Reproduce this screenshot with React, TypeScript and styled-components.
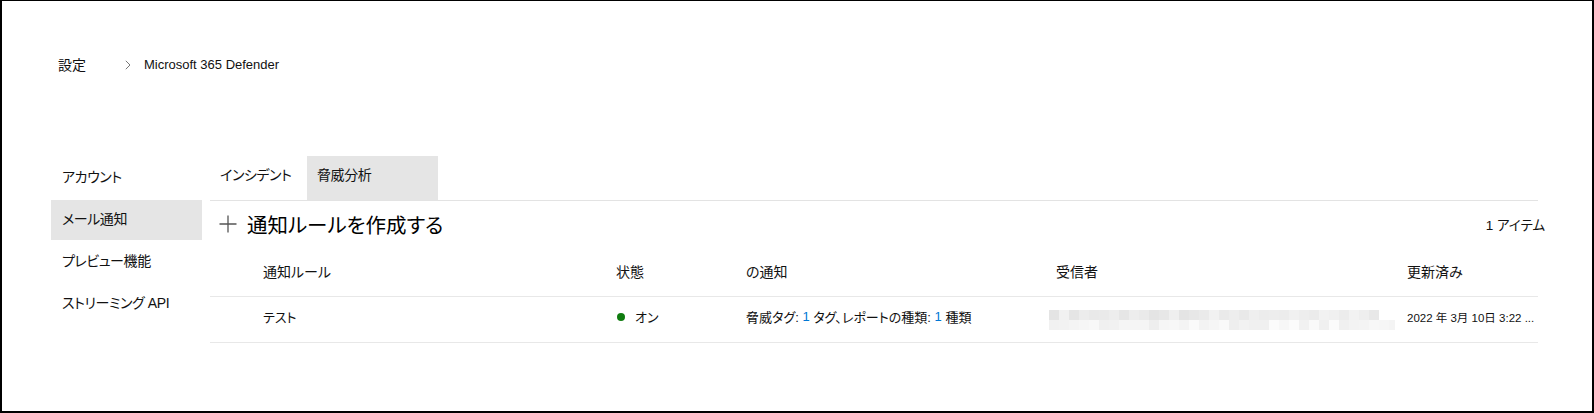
import React from "react";
import styled, { createGlobalStyle } from "styled-components";

const GlobalStyle = createGlobalStyle`
  html, body {
    margin: 0;
    padding: 0;
    background: #fff;
  }
  body {
    font-family: "Liberation Sans", "Noto Sans CJK JP", sans-serif;
    font-size: 14px;
    color: #111;
    font-feature-settings: "palt";
  }
`;

const Frame = styled.div`
  box-sizing: border-box;
  width: 1594px;
  height: 413px;
  border: 2px solid #000;
  border-top-width: 1px;
  padding-left: 49px;
  overflow: hidden;
`;

const Breadcrumb = styled.div`
  display: flex;
  align-items: center;
  height: 20px;
  margin-top: 54px;
  padding-left: 7px;
`;

const Crumb = styled.span`
  line-height: 20px;
`;

const CrumbLink = styled.span`
  font-size: 13px;
  line-height: 20px;
`;

const Chevron = styled.svg`
  margin: 0 13px 0 39px;
`;

const Body = styled.div`
  display: flex;
  align-items: flex-start;
  margin-top: 81px;
`;

const Nav = styled.nav`
  width: 151px;
  display: flex;
  flex-direction: column;
  gap: 2px;
  padding-top: 2px;
  letter-spacing: -0.03em;
`;

const NavItem = styled.div<{ $active?: boolean }>`
  box-sizing: border-box;
  height: 40px;
  display: flex;
  align-items: center;
  padding: 0 0 4px 11px;
  background: ${(p) => (p.$active ? "#e5e5e5" : "transparent")};
`;

const Content = styled.div`
  width: 1328px;
  margin-left: 8px;
`;

const TabBar = styled.div`
  display: flex;
  border-bottom: 1px solid #e3e3e3;
`;

const Tab = styled.div<{ $w: number; $active?: boolean }>`
  box-sizing: border-box;
  width: ${(p) => p.$w}px;
  height: 44px;
  display: flex;
  align-items: center;
  padding: 0 0 9px 10px;
  letter-spacing: -0.03em;
  background: ${(p) => (p.$active ? "#e5e5e5" : "transparent")};
`;

const HeaderRow = styled.div`
  box-sizing: border-box;
  height: 48px;
  display: flex;
  align-items: center;
  padding-bottom: 3px;
  margin-right: -7px;
`;

const PlusIcon = styled.svg`
  margin-left: 9px;
  margin-right: 10px;
`;

const Title = styled.h1`
  margin: 0;
  font-size: 20.5px;
  font-weight: 400;
  color: #000;
  flex: 1;
`;

const Count = styled.span`
  font-size: 13.5px;
`;

const Grid = styled.div`
  box-sizing: border-box;
  display: grid;
  grid-template-columns: 53px 353px 130px 310px 351px 131px;
  align-items: center;
`;

const HeadRow = styled(Grid)`
  height: 48px;
  padding-bottom: 3px;
  border-bottom: 1px solid #e8e8e8;
`;

const DataRow = styled(Grid)`
  height: 46px;
  padding-bottom: 6px;
  border-bottom: 1px solid #e8e8e8;
`;

const Cell = styled.div<{ $small?: boolean }>`
  font-size: ${(p) => (p.$small ? "11.5px" : "13px")};
  white-space: nowrap;
  display: flex;
  align-items: center;
`;

const HeadCell = styled.div`
  font-size: 14px;
  white-space: nowrap;
`;

const Dot = styled.span`
  width: 8px;
  height: 8px;
  border-radius: 50%;
  background: #107c10;
  margin: 0 10px 0 1px;
`;

const Num = styled.span`
  color: #0078d4;
`;

const Mosaic = styled.svg`
  margin-left: -7px;
  margin-top: 6px;
  display: block;
`;

const shade = (i: number, row: number) => {
  const v = Math.abs(Math.sin(i * 12.9898 + row * 78.233) * 43758.5453) % 1;
  const base = row === 0 ? 228 : 238;
  const g = Math.round(base + v * 14);
  return `rgb(${g},${g},${g})`;
};

const Redacted: React.FC = () => (
  <Mosaic width="346" height="20" viewBox="0 0 346 20">
    {Array.from({ length: 35 }).map((_, i) => (
      <rect key={`a${i}`} x={i * 10} y={0} width={10} height={10} fill={i >= 33 ? "#fff" : shade(i, 0)} />
    ))}
    {Array.from({ length: 35 }).map((_, i) => (
      <rect key={`b${i}`} x={i * 10} y={10} width={10} height={10} fill={shade(i, 1)} />
    ))}
  </Mosaic>
);

const App: React.FC = () => {
  return (
    <>
      <GlobalStyle />
      <Frame>
        <Breadcrumb>
          <Crumb>設定</Crumb>
          <Chevron width="6" height="10" viewBox="0 0 6 10">
            <path d="M0.8 0.8 L5 5 L0.8 9.2" fill="none" stroke="#777" strokeWidth="1" />
          </Chevron>
          <CrumbLink>Microsoft 365 Defender</CrumbLink>
        </Breadcrumb>

        <Body>
          <Nav>
            <NavItem>アカウント</NavItem>
            <NavItem $active>メール通知</NavItem>
            <NavItem>プレビュー機能</NavItem>
            <NavItem>ストリーミング API</NavItem>
          </Nav>

          <Content>
            <TabBar>
              <Tab $w={97}>インシデント</Tab>
              <Tab $w={131} $active>脅威分析</Tab>
            </TabBar>

            <HeaderRow>
              <PlusIcon width="18" height="18" viewBox="0 0 18 18">
                <path d="M9 0.5 V17.5 M0.5 9 H17.5" stroke="#555" strokeWidth="1.3" />
              </PlusIcon>
              <Title>通知ルールを作成する</Title>
              <Count>1 アイテム</Count>
            </HeaderRow>

            <HeadRow>
              <span />
              <HeadCell>通知ルール</HeadCell>
              <HeadCell>状態</HeadCell>
              <HeadCell>の通知</HeadCell>
              <HeadCell>受信者</HeadCell>
              <HeadCell>更新済み</HeadCell>
            </HeadRow>

            <DataRow>
              <span />
              <Cell>テスト</Cell>
              <Cell>
                <Dot />
                オン
              </Cell>
              <Cell>
                脅威タグ: <Num>&nbsp;1&nbsp;</Num>タグ、レポートの種類: <Num>&nbsp;1&nbsp;</Num>種類
              </Cell>
              <Cell>
                <Redacted />
              </Cell>
              <Cell $small>2022 年 3月 10日 3:22 ...</Cell>
            </DataRow>
          </Content>
        </Body>
      </Frame>
    </>
  );
};

export default App;
